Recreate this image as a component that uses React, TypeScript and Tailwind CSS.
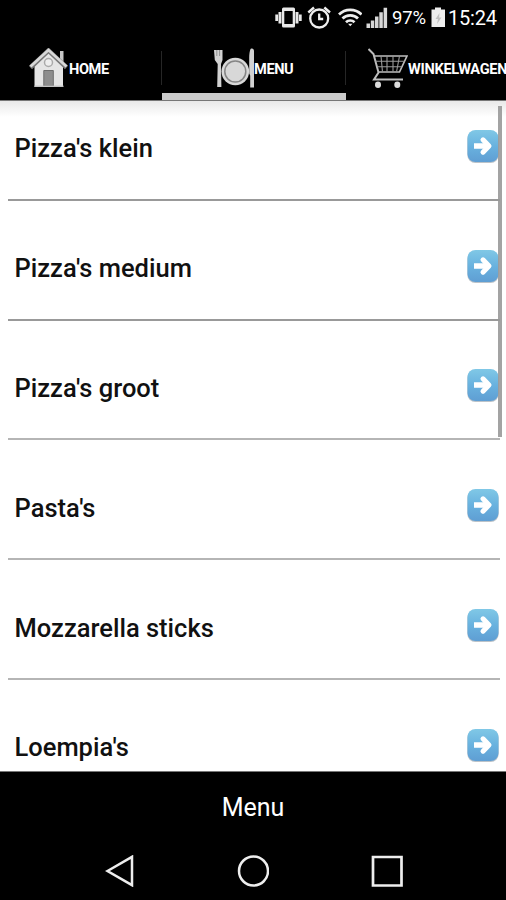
import React from 'react';

const categories = [
  "Pizza's klein",
  "Pizza's medium",
  "Pizza's groot",
  "Pasta's",
  'Mozzarella sticks',
  "Loempia's",
];

function StatusBar() {
  return (
    <div className="flex h-9 shrink-0 items-center pl-[274px] text-white">
      {/* vibrate */}
      <svg className="h-6 w-[29px] shrink-0" viewBox="0 0 29 24" fill="#e8e8e8">
        <path fillRule="evenodd" d="M9.5 1.500h10a1.500 1.500 0 0 1 1.500 1.500v17a1.500 1.500 0 0 1-1.500 1.500h-10A1.500 1.500 0 0 1 8 20V3a1.500 1.500 0 0 1 1.500-1.500ZM10.300 5v13h8.400V5Z" />
        <path d="M4.500 6H7.500v11.500H4.500ZM1.300 8.500h2.700v6.500H1.300ZM21.500 6h3v11.500h-3ZM25 8.500h2.700v6.500h-2.700Z" />
      </svg>
      {/* alarm */}
      <svg className="ml-[4px] h-6 w-6 shrink-0" viewBox="0 0 24 24" fill="none" stroke="#eeeeee" strokeWidth="2.300">
        <circle cx="12.200" cy="12.500" r="9" />
        <path d="M12.200 7.500v5.500h4" />
        <path d="M1.300 6.500l5.700-5M23 6.500l-5.700-5" strokeWidth="2.400" />
      </svg>
      {/* wifi */}
      <svg className="ml-[7px] h-6 w-6 shrink-0" viewBox="0 0 24 24" fill="none" stroke="#eeeeee" strokeWidth="2.700">
        <path d="M1 8.500c6-6.300 16.500-6.300 22.500 0" />
        <path d="M4.500 12.500c4-4.300 11.500-4.300 15.500 0" />
        <path d="M8 16.200c2.300-2.300 6.200-2.300 8.500 0" />
        <path d="M10 17.800h4.500l-2.250 2.500Z" fill="#eeeeee" stroke="none" />
      </svg>
      {/* signal */}
      <svg className="ml-1 h-6 w-[22px] shrink-0" viewBox="0 0 22 24" fill="#d8d8d8">
        <path d="M0.500 17.500h3.500V22H0.500ZM4.800 14.500h3.500V22H4.800ZM9 10.500h3.500V22H9ZM13.300 6.200h3.500V22h-3.500ZM17.600 1.800h3.500V22h-3.500Z" />
      </svg>
      <span className="ml-[4px] w-[35px] text-[18.500px] leading-none tracking-[-0.2px] whitespace-nowrap">97%</span>
      {/* battery */}
      <svg className="ml-[4px] h-6 w-[15px] shrink-0" viewBox="0 0 15 24">
        <path d="M4 1.500h6v2h4V21H0.500V3.500H4Z" fill="#eeeeee" />
        <path d="M8.500 7l-4 6h2.500L6 18l4.500-6.500H8Z" fill="#c2c2c2" />
      </svg>
      <span className="ml-[2px] text-[20px] leading-none tracking-[-0.2px]">15:24</span>
    </div>
  );
}

function HomeIcon() {
  return (
    <svg className="h-10 w-10 shrink-0" viewBox="0 0 40 40">
      <path d="M31 3h3.500v11H31Z" fill="#c8c8c8" />
      <path d="M5.500 18L20 4l14 14v21H5.500Z" fill="#e5e5e5" />
      <path d="M1.500 19.500L19.500 2.500l18 17" fill="none" stroke="#777777" strokeWidth="4.500" />
      <path d="M1.500 18.500L19.500 2l18 16.500" fill="none" stroke="#d8d8d8" strokeWidth="2.700" />
      <circle cx="19.500" cy="14.500" r="4" fill="#eeeeee" stroke="#aaaaaa" strokeWidth="1.500" />
      <path d="M14.800 22.500h9.500V38h-9.500Z" fill="#8d8d8d" stroke="#6d6d6d" />
      <path d="M5.500 38.300h29" stroke="#c4c4c4" strokeWidth="1.400" />
    </svg>
  );
}

function PlateIcon() {
  return (
    <svg className="h-10 w-10 shrink-0" viewBox="0 0 40 40">
      <path d="M0 2h8.500v10L7 16l0.400 23H3.200L3.700 16 0.800 12Z" fill="#d2d2d2" />
      <path d="M2.800 2v6M5.600 2v6" stroke="#777777" strokeWidth="0.700" />
      <path d="M36.500 1c2-1 3.500 0 3.500 2v36.500h-3.800V27.500l-1-2V10c0-4 .5-7 1.300-9Z" fill="#d2d2d2" />
      <circle cx="21.300" cy="23.500" r="13.800" fill="#d8d8d8" />
      <circle cx="21.300" cy="23.500" r="10.500" fill="#d8d8d8" stroke="#858585" strokeWidth="1.500" />
    </svg>
  );
}

function CartIcon() {
  return (
    <svg className="h-10 w-10 shrink-0" viewBox="0 0 40 40" fill="none" stroke="#bdbdbd">
      <path d="M0.500 1l5 5 5 18.500-4.500 7h29" strokeWidth="2" />
      <path d="M6.500 8h32.500L31.500 24H10.500" strokeWidth="1.700" />
      <path d="M7.500 13.300h29M9 18.700h25M13 8l1.500 16M19 8v16M25 8v16M31.500 8l-3 16" strokeWidth="1.100" stroke="#999999" />
      <ellipse cx="10" cy="36.800" rx="3" ry="3.200" fill="#dddddd" stroke="none" />
      <ellipse cx="29.300" cy="36.800" rx="3" ry="3.200" fill="#dddddd" stroke="none" />
    </svg>
  );
}

function TabBar() {
  return (
    <nav className="flex h-[65px] shrink-0 overflow-hidden border-b border-[#777777] text-[14.6px] font-bold text-white">
      <div className="flex w-[162px] shrink-0 pt-3 pl-[29px]">
        <HomeIcon />
        <span className="mt-[11px] leading-5 tracking-[-0.4px]">HOME</span>
      </div>
      <div className="flex w-[184px] shrink-0 flex-col justify-between">
        <div className="flex pt-3">
          <div className="-ml-px mt-[3px] h-[34px] w-px bg-[#262626]"></div>
          <div className="ml-[52px] flex">
            <PlateIcon />
            <span className="mt-[11px] leading-5 tracking-[-0.4px]">MENU</span>
          </div>
        </div>
        {/* active tab */}
        <div className="h-[7px] shrink-0 bg-[#cbcbcb]"></div>
      </div>
      <div className="flex w-[184px] shrink-0 pt-3">
        <div className="-ml-px mt-[3px] h-[34px] w-px bg-[#262626]"></div>
        <div className="ml-[22px] flex">
          <CartIcon />
          <span className="mt-[11px] leading-5 tracking-[-0.3px]">WINKELWAGEN</span>
        </div>
      </div>
    </nav>
  );
}

function ArrowIcon() {
  return (
    <svg className="h-[33px] w-8 shrink-0" viewBox="0 0 32 33">
      <defs>
        <linearGradient id="arrowBlue" x1="0" y1="0" x2="0" y2="1">
          <stop offset="0" stopColor="#80c8e6" />
          <stop offset="0.500" stopColor="#69b2df" />
          <stop offset="1" stopColor="#5f9ed3" />
        </linearGradient>
      </defs>
      <rect x="0.300" y="1" width="31.400" height="32" rx="8" fill="#bcc3c9" />
      <rect x="0.500" y="0" width="31" height="32" rx="8" fill="url(#arrowBlue)" />
      <path d="M7 16h14" fill="none" stroke="#ffffff" strokeWidth="5.500" />
      <path d="M16 9.800l6 6.200-6 6.200" fill="none" stroke="#ffffff" strokeWidth="5" strokeLinecap="round" strokeLinejoin="round" />
    </svg>
  );
}

export default function App() {
  return (
    <div className="flex h-[900px] w-[506px] flex-col overflow-hidden bg-black font-['Roboto',sans-serif]">
      <StatusBar />
      <TabBar />
      <main className="relative flex h-[670px] shrink-0 flex-col overflow-hidden bg-white">
        <div className="absolute inset-x-0 top-0 h-4 bg-linear-to-b from-[#e9e9e9] to-white"></div>
        <ul className="relative -mt-5 pr-[6px] pl-2">
          {categories.map((name) => (
            <li
              key={name}
              className="flex h-[119.8px] items-end justify-between border-b-2 border-[#999999] pr-px pb-9 pl-[6.5px] nth-[n+3]:border-[#b5b5b5]"
            >
              <span className="-mb-[0.7px] text-[25.5px] leading-[30px] font-medium text-[#111111]">{name}</span>
              <ArrowIcon />
            </li>
          ))}
        </ul>
        {/* scrollbar */}
        <div className="absolute top-[5px] right-[4px] h-[331px] w-1 bg-[#999999]/90"></div>
      </main>
      <footer className="h-[129px] shrink-0 border-t border-[#777777] text-white">
        <div className="flex h-[71px] items-center justify-center text-[25px]">Menu</div>
        <div className="flex h-14 items-center pl-[105px]">
          <svg className="h-8 w-[30px]" viewBox="0 0 30 32" fill="none" stroke="#eeeeee" strokeWidth="2.500">
            <path d="M2.500 16L27 1.800v28.400Z" />
          </svg>
          <svg className="ml-[102px] h-8 w-8" viewBox="0 0 32 32" fill="none" stroke="#eeeeee" strokeWidth="2.500">
            <circle cx="16.500" cy="16" r="14.500" />
          </svg>
          <svg className="ml-[102px] h-8 w-8" viewBox="0 0 32 32" fill="none" stroke="#eeeeee" strokeWidth="2.700">
            <path d="M2 2h28.500v28.500H2Z" />
          </svg>
        </div>
      </footer>
    </div>
  );
}
